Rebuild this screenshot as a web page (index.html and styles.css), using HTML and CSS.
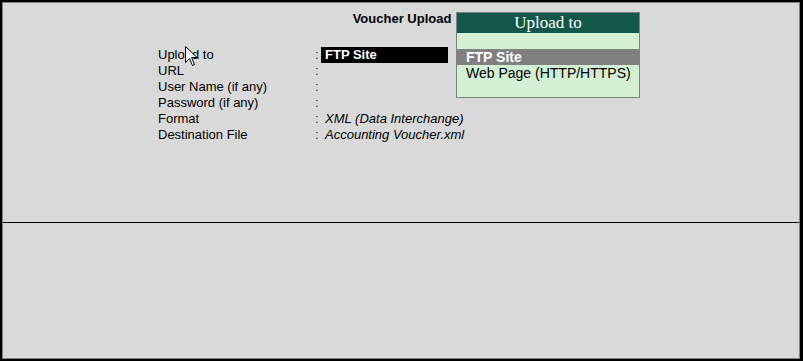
FILE: index.html
```html
<!DOCTYPE html>
<html lang="en">
<head>
    <meta charset="UTF-8">
    <meta name="viewport" content="width=device-width, initial-scale=1.0">
    <title>Voucher Upload</title>
    <link rel="stylesheet" href="styles.css">
</head>
<body>
    <div class="screen">
        <div class="panel">
            <div class="top">
                <h2 class="title">Voucher Upload</h2>
                <div class="fields">
                    <div class="label">Upload to</div><div class="colon">:</div><div class="value"><span class="active">FTP Site</span></div>
                    <div class="label">URL</div><div class="colon">:</div><div class="value"></div>
                    <div class="label">User Name (if any)</div><div class="colon">:</div><div class="value"></div>
                    <div class="label">Password (if any)</div><div class="colon">:</div><div class="value"></div>
                    <div class="label">Format</div><div class="colon">:</div><div class="value info">XML (Data Interchange)</div>
                    <div class="label">Destination File</div><div class="colon">:</div><div class="value info">Accounting Voucher.xml</div>
                </div>

                <div class="popup">
                    <div class="popup-head">Upload to</div>
                    <div class="popup-row"></div>
                    <div class="popup-row selected">FTP Site</div>
                    <div class="popup-row">Web Page (HTTP/HTTPS)</div>
                    <div class="popup-row"></div>
                </div>

                <svg class="cursor" width="13" height="21" viewBox="0 0 13 21">
                    <path d="M0.5 0.5 L0.5 16.5 L4.5 12.5 L7.5 19.5 L9.5 18.5 L6.5 11.5 L12 11.5 Z" fill="#fff" stroke="#000" stroke-width="1"/>
                </svg>
            </div>
            <div class="bottom"></div>
        </div>
    </div>
</body>
</html>
```

FILE: styles.css
```css
html, body {
    margin: 0;
    padding: 0;
}
body {
    width: 803px;
    height: 361px;
    font-family: "Liberation Sans", Arial, sans-serif;
    font-size: 13px;
    color: #000;
    background-color: #000;
}
.screen {
    box-sizing: border-box;
    width: 803px;
    height: 361px;
    border-style: solid;
    border-color: #000;
    border-width: 2px 3px 2px 2px;
}
.panel {
    box-sizing: border-box;
    height: 100%;
    border: 1px solid #808080;
    background: #d9d9d9;
    display: flex;
    flex-direction: column;
}
.top {
    position: relative;
    height: 220px;
    padding-top: 8px;
    box-sizing: border-box;
    border-bottom: 1px solid #000;
}
.bottom {
    flex: 1;
}
.title {
    margin: 0;
    font-size: 13px;
    line-height: 16px;
    font-weight: bold;
    text-align: center;
    padding-left: 2px;
}
.fields {
    display: grid;
    grid-template-columns: 157px 6px 127px;
    grid-auto-rows: 16px;
    line-height: 16px;
    margin: 20px 0 0 155px;
}
.colon {
    color: #333;
}
.value {
    white-space: nowrap;
}
.info {
    font-style: italic;
    padding-left: 4px;
}
.active {
    display: block;
    height: 16px;
    background: #000;
    color: #fff;
    font-weight: bold;
    padding-left: 4px;
}
.popup {
    position: absolute;
    left: 453px;
    top: 9px;
    width: 182px;
    border: 1px solid #808080;
    background: #d4f0d4;
    font-size: 14px;
}
.popup-head {
    height: 20px;
    line-height: 20px;
    background: #12574a;
    color: #fff;
    font-family: "Liberation Serif", "Times New Roman", serif;
    font-size: 17px;
    text-align: center;
}
.popup-row {
    height: 16px;
    line-height: 16px;
    padding-left: 9px;
    white-space: nowrap;
}
.popup-row.selected {
    background: #808080;
    color: #fff;
    font-weight: bold;
}
.cursor {
    position: absolute;
    left: 182px;
    top: 43px;
}
```
